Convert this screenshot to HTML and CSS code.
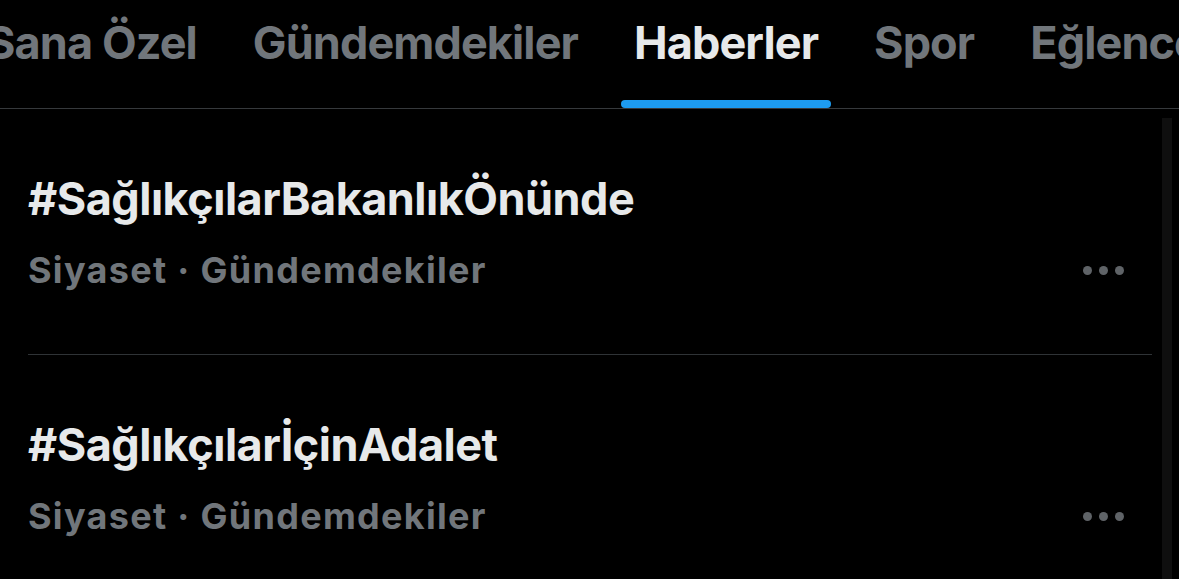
FILE: index.html
```html
<!DOCTYPE html>
<html lang="tr">
<head>
  <meta charset="UTF-8">
  <meta name="viewport" content="width=device-width, initial-scale=1.0">
  <title>Keşfet - Haberler</title>
  <link rel="stylesheet" href="styles.css">
</head>
<body>

  <!-- Tabs -->
  <div class="tabs">
    <div class="tabs-inner">
      <div class="tab">Sana Özel</div>
      <div class="tab">Gündemdekiler</div>
      <div class="tab active">Haberler<span class="indicator"></span></div>
      <div class="tab">Spor</div>
      <div class="tab">Eğlence</div>
    </div>
  </div>

  <!-- Trends -->
  <div class="feed">
    <div class="list">
      <div class="trend">
        <div class="trend-title">#SağlıkçılarBakanlıkÖnünde</div>
        <div class="trend-meta">
          <span>Siyaset · Gündemdekiler</span>
          <span class="more"><i></i><i></i><i></i></span>
        </div>
      </div>
      <div class="trend">
        <div class="trend-title">#SağlıkçılarİçinAdalet</div>
        <div class="trend-meta">
          <span>Siyaset · Gündemdekiler</span>
          <span class="more"><i></i><i></i><i></i></span>
        </div>
      </div>
    </div>
    <div class="scrollbar"></div>
  </div>

</body>
</html>
```

FILE: styles.css
```css
html {
  overflow: hidden;
}

body {
  font-family: Inter, "Noto Sans", sans-serif;
  margin: 0;
  padding: 0;
  color: #e7e9ea;
  background-color: black;
  overflow: hidden;
  height: 579px;
}

.tabs {
  border-bottom: 1px solid #36393c;
  height: 108px;
  overflow: hidden;
}

.tabs-inner {
  display: flex;
  gap: 30px;
  margin-left: -27px;
  height: 100%;
}

.tab {
  position: relative;
  flex: none;
  padding: 16px 13px 0;
  font-size: 45px;
  font-weight: 700;
  line-height: 54px;
  letter-spacing: -0.9px;
  color: #71767b;
  white-space: nowrap;
}

.tab.active {
  color: #e7e9ea;
}

.indicator {
  position: absolute;
  left: 0;
  right: 0;
  bottom: 0;
  height: 8px;
  border-radius: 4px;
  background-color: #1d9bf0;
}

.feed {
  display: flex;
}

.list {
  flex: 1;
  padding-left: 28px;
}

.trend {
  padding: 63px 0 63px;
  border-bottom: 1px solid #2f3336;
}

.trend-title {
  font-size: 45px;
  font-weight: 700;
  line-height: 54px;
  letter-spacing: -0.5px;
}

.trend-meta {
  display: flex;
  align-items: center;
  justify-content: space-between;
  margin-top: 23px;
  font-size: 36px;
  font-weight: 700;
  line-height: 42px;
  letter-spacing: 1.3px;
  color: #71767b;
}

.more {
  display: flex;
  gap: 7px;
  margin-right: 28px;
}

.more i {
  width: 9px;
  height: 9px;
  border-radius: 50%;
  background-color: #5f6367;
}

.scrollbar {
  width: 10px;
  margin: 9px 7px 0 10px;
  background-color: #0f0f0f;
}
```
